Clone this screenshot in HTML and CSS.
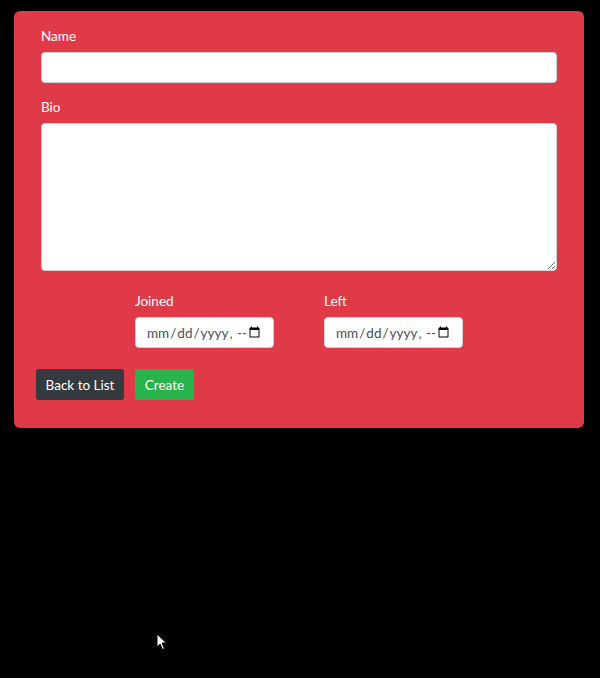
FILE: index.html
```html
<!DOCTYPE html>
<html>
<head>
<meta charset="utf-8">
<link rel="stylesheet" href="styles.css">
</head>
<body>
<div class="card">
  <div class="field">
    <label class="label" for="name">Name</label>
    <input class="control" id="name" type="text">
  </div>
  <div class="field">
    <label class="label" for="bio">Bio</label>
    <textarea class="control area" id="bio"></textarea>
  </div>
  <div class="dates">
    <div class="date-col">
      <label class="label" for="joined">Joined</label>
      <input class="control date" id="joined" type="datetime-local">
    </div>
    <div class="date-col">
      <label class="label" for="left">Left</label>
      <input class="control date" id="left" type="datetime-local">
    </div>
  </div>
  <div class="actions">
    <button class="btn btn-dark" type="button">Back to List</button>
    <button class="btn btn-green" type="button">Create</button>
  </div>
</div>
<svg class="cursor" width="12" height="18" viewBox="0 0 12 18"><path d="M1 1 L1 14 L4 11 L6.5 16.5 L8.5 15.5 L6 10 L10.5 10 Z" fill="#fff" stroke="#000" stroke-width="1"/></svg>
</body>
</html>
```
FILE: styles.css
```css
html, body {
  margin: 0;
  padding: 0;
  background: #000;
  font-family: "Segoe UI", Lato, "Noto Sans", sans-serif;
}
body {
  position: relative;
  min-height: 678px;
}
.card {
  box-sizing: border-box;
  margin: 11px 0 0 14px;
  width: 570px;
  height: 417px;
  background: #e03a48;
  border-radius: 6px;
  padding: 15px 27px 28px 27px;
}
.field {
  margin-bottom: 14px;
}
.label {
  display: block;
  color: #fff;
  font-size: 13.5px;
  line-height: 20px;
  margin-bottom: 6px;
}
.control {
  box-sizing: border-box;
  display: block;
  width: 100%;
  height: 31px;
  border: 1px solid #ced4da;
  border-radius: 4px;
  background: #fff;
  font-family: inherit;
  font-size: 13px;
  padding: 4px 10px;
  margin: 0;
}
.area {
  height: 148px;
  resize: vertical;
}
.dates {
  display: flex;
  gap: 50px;
  margin-left: 94px;
  padding-top: 6px;
}
.date {
  width: 139px;
  color: #495057;
  font-size: 13.5px;
  padding: 4px 10px;
}
.actions {
  display: flex;
  gap: 11px;
  margin-left: -5px;
  margin-top: 21px;
}
.btn {
  height: 31px;
  border: none;
  border-radius: 3px;
  color: #fff;
  font-family: inherit;
  font-size: 13.5px;
  padding: 0;
  white-space: nowrap;
}
.btn-dark {
  background: #343a40;
  width: 88px;
}
.btn-green {
  background: #28b44a;
  width: 59px;
}
.cursor {
  position: absolute;
  left: 156px;
  top: 633px;
}
```
